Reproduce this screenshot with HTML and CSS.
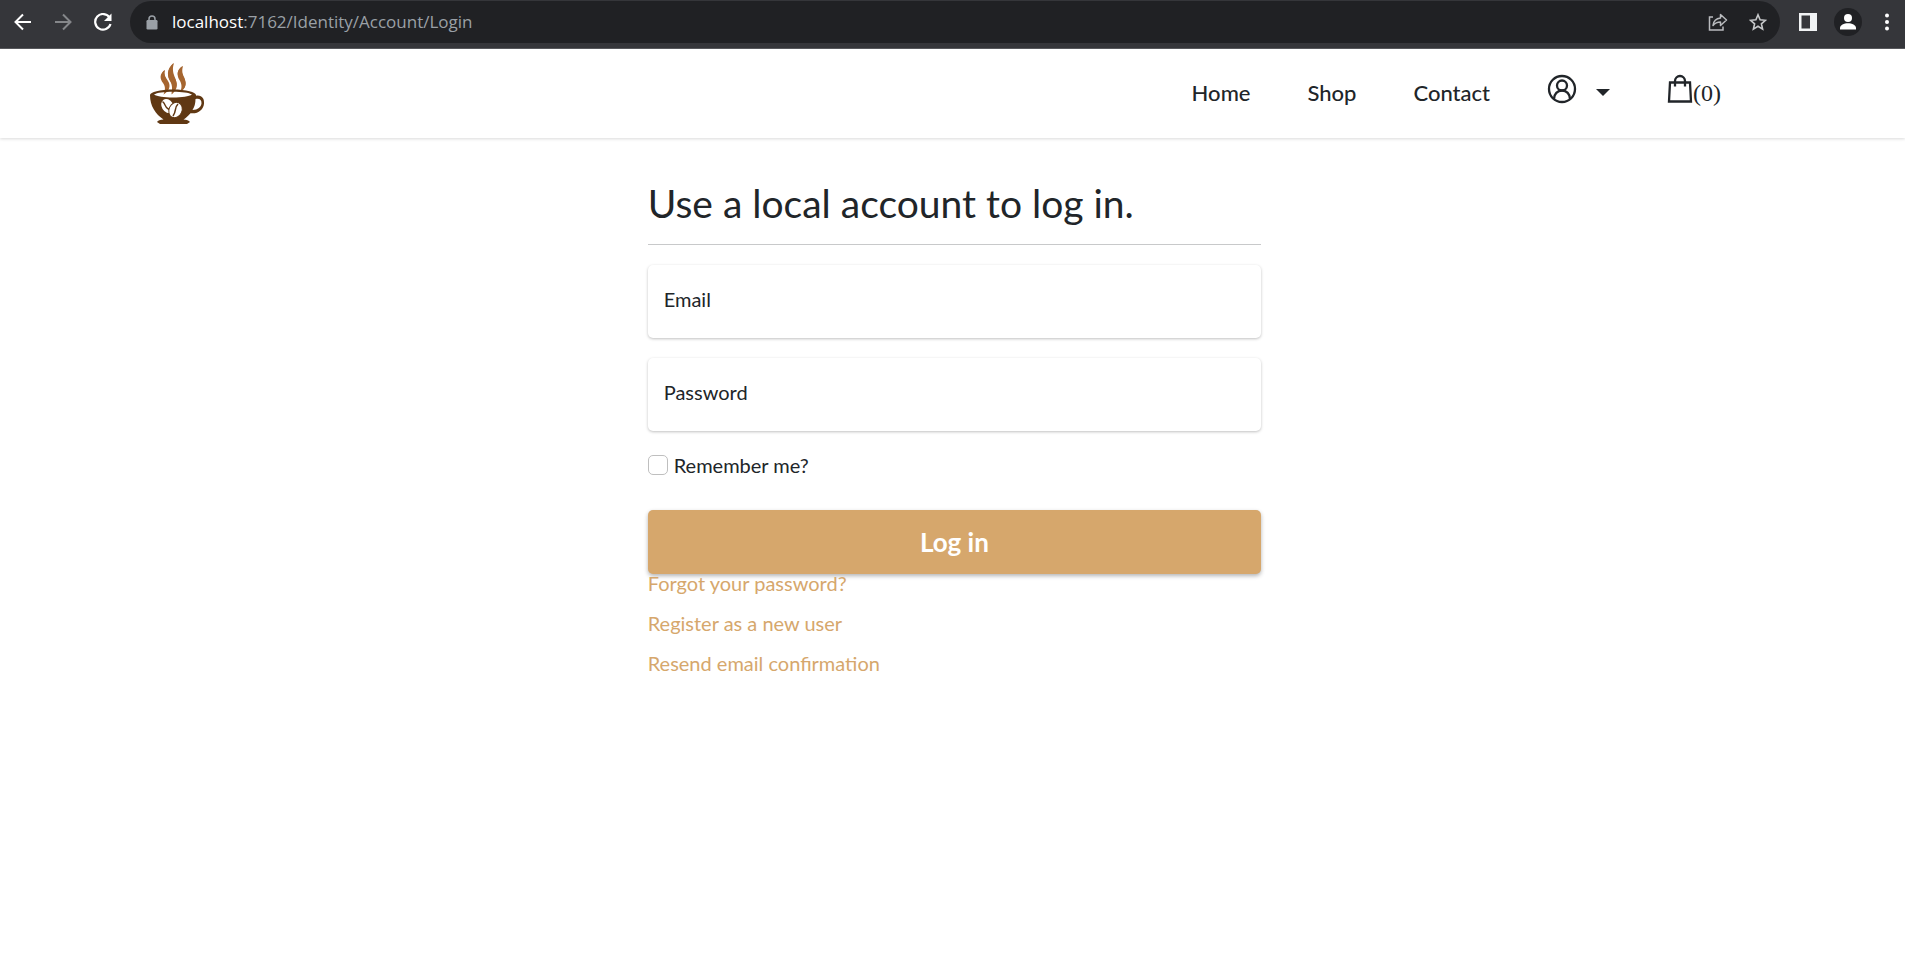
FILE: index.html
```html
<!DOCTYPE html>
<html lang="en">
<head>
<meta charset="utf-8">
<title>Log in</title>
<link rel="stylesheet" href="styles.css">
</head>
<body>
<div class="browser-bar">
  <button class="bar-btn" aria-label="Back"><svg width="18" height="18" viewBox="0 0 18 18" fill="none" stroke="#fff" stroke-width="2"><path d="M17 9H2M9 1.500L1.500 9L9 16.500"/></svg></button>
  <button class="bar-btn" aria-label="Forward"><svg width="18" height="18" viewBox="0 0 18 18" fill="none" stroke="#85878a" stroke-width="2"><path d="M1 9h15M9 1.500L16.500 9L9 16.500"/></svg></button>
  <button class="bar-btn" aria-label="Reload"><svg width="18" height="18" viewBox="0 0 18 18"><path d="M15.500 4.500A7.800 7.800 0 1 0 16.500 11" fill="none" stroke="#fff" stroke-width="2.200"/><path d="M17.500 .5v7.500h-7.500z" fill="#fff"/></svg></button>
  <div class="address">
    <svg width="12" height="15" viewBox="0 0 12 15"><rect x=".5" y="5" width="11" height="9.500" rx="1.200" fill="#9aa0a6"/><path d="M3 6V4a3 3 0 0 1 6 0v2" fill="none" stroke="#9aa0a6" stroke-width="1.500"/></svg>
    <span class="url"><span class="host">localhost</span>:7162/Identity/Account/Login</span>
    <button class="addr-btn" aria-label="Share"><svg width="20" height="18" viewBox="0 0 20 18" fill="none" stroke="#b9bbbe" stroke-width="1.500"><path d="M5 4H1.500v13H15v-3.500"/><path d="M5 12.500C5.500 8 8 5.500 12.500 5V1.500L18.500 7l-6 5.500V9C9 9 7 10 5 12.500z" stroke-linejoin="round"/></svg></button>
    <button class="addr-btn" aria-label="Bookmark"><svg width="18" height="18" viewBox="0 0 18 18" fill="none" stroke="#c6c8ca" stroke-width="1.600"><path d="M9 1.800l2.100 5 5.300.5-4 3.500 1.200 5.300L9 13.300l-4.600 2.800 1.200-5.300-4-3.500 5.300-.5z"/></svg></button>
  </div>
  <button class="bar-btn" aria-label="Side panel"><svg width="18" height="18" viewBox="0 0 18 18"><path fill="#f1f3f4" fill-rule="evenodd" d="M0 0h18v18H0zM2.500 2.500v13h8.500v-13z"/></svg></button>
  <button class="bar-btn" aria-label="Profile"><svg width="28" height="28" viewBox="0 0 28 28"><circle cx="14" cy="14" r="14" fill="#202124"/><circle cx="14" cy="10" r="4" fill="#fff"/><path d="M6 21.500v-1.500c0-3 4-4.800 8-4.800s8 1.800 8 4.800v1.500z" fill="#fff"/></svg></button>
  <button class="bar-btn menu" aria-label="Menu"><svg width="4" height="18" viewBox="0 0 4 18" fill="#fff"><circle cx="2" cy="2.500" r="2"/><circle cx="2" cy="9" r="2"/><circle cx="2" cy="15.500" r="2"/></svg></button>
</div>
<header class="site-header">
  <a href="#" class="logo" aria-label="Coffee shop home">
    <svg width="56" height="62" viewBox="0 0 56 62">
      <g fill="#a5652f"><path d="M14.500 8C10 12 11 16 14.500 21c3 4 1.500 8-1 11.500 5-3 8-8 4.500-13.500-3-5-5-7-3.500-11z"/><path d="M15 8C9 12 10 17 13 21c3 4 2 8 .5 11.500 4-3 6-8 3.500-13.500-2-4-3-7-2-11z"/><path d="M23.500 1C16 8 17 14 21 20c3 4 2 9 .5 12.500 5-4 7-9 4-15C22.500 12 21 8 23.500 1z"/><path d="M24 1C17 7 17 14 20 19c3 5 2 9 1.500 13 5-5 6-9 4-15C23 11 22 7 24 1z"/><path d="M32.500 4C26 9 27 13 30.500 18.500c2.500 4 2 8 0 11.500 5-4 7-8 3.500-14-2.500-4-3-8-1.500-12z"/><path d="M33 4C26 8 27 14 29.500 18c3 5 2 8 1 12 5-4 6-8 4-14-2-4-3-7-1.500-12z"/></g>
      <path fill="#603813" fill-rule="evenodd" d="M0 33c0-3 10-5.500 23-5.500s23 2.500 23 5.500v.7c6-1 8.500 3 8 8-.6 6-6 10.500-13.500 9.500-2.500 3-5 5-7 6.300 3 .3 5.500 1 6.500 2.500l-3 2H10l-3-2c1-1.500 3-2.200 6.500-2.500C5.500 52 0 44 0 33zm45.500 4c0 4-1 8-3 11 5.500 0 8.500-3 9-6.500.3-3.500-2-5.500-6-4.500zM4 32.500c3 1.800 10 3 19 3s16-1.200 19-3c-3-1.800-10-2.800-19-2.800s-16 1-19 2.800z"/>
      <g fill="#fff"><ellipse cx="17.500" cy="44" rx="5.800" ry="7.500" transform="rotate(-32 17.500 44)"/><ellipse cx="25.500" cy="48" rx="6.500" ry="8" transform="rotate(24 25.500 48)" stroke="#603813"/></g>
      <path d="M12.500 39.500c4 3 1 5 6.500 8M28 42c-4 4-1 6-5 12" fill="none" stroke="#603813" stroke-width="1.500"/>
    </svg>
  </a>
  <nav class="nav">
    <a href="#">Home</a>
    <a href="#">Shop</a>
    <a href="#">Contact</a>
    <button class="account" aria-label="Account"><svg width="30" height="30" viewBox="0 0 30 30" fill="none" stroke="#212529" stroke-width="2.300"><circle cx="15" cy="15" r="13"/><circle cx="15" cy="11.500" r="5"/><path d="M7 25c0-5 3.500-8.500 8-8.500s8 3.500 8 8.500"/></svg><svg class="caret" width="14" height="7" viewBox="0 0 14 7"><path d="M0 0h14L7 7z" fill="#212529"/></svg></button>
    <a href="#" class="cart" aria-label="Cart, 0 items"><svg width="26" height="30" viewBox="0 0 26 30" fill="none" stroke="#212529" stroke-width="2.300"><path d="M3 8.500h20l1 19H2zM8 12.500V7a5 5 0 0 1 10 0v5.500"/></svg><span>(0)</span></a>
  </nav>
</header>
<main class="content">
  <form class="login">
    <h1>Use a local account to log in.</h1>
    <hr>
    <label class="field"><span>Email</span><input type="email" name="email"></label>
    <label class="field"><span>Password</span><input type="password" name="password"></label>
    <label class="remember"><input type="checkbox" name="remember">Remember me?</label>
    <button class="submit" type="button">Log in</button>
    <div class="links">
      <a href="#">Forgot your password?</a>
      <a href="#">Register as a new user</a>
      <a href="#">Resend email confirmation</a>
    </div>
  </form>
</main>
</body>
</html>
```

FILE: styles.css
```css
* { box-sizing: border-box; }
body {
  margin: 0;
  background: #fff;
  color: #212529;
  font-family: Lato, "Open Sans", sans-serif;
  font-size: 20px;
  line-height: 30px;
}
button { padding: 0; border: 0; background: none; font: inherit; color: inherit; }
a { text-decoration: none; }
svg { display: block; flex: none; }

.browser-bar {
  display: flex;
  align-items: center;
  height: 49px;
  padding: 0 9px 4px 3px;
  background: #35363a;
  border-bottom: 1px solid #5a5b5f;
}
.bar-btn { display: flex; justify-content: center; width: 40px; }
.menu { width: 38px; margin-right: -10px; }
.address {
  flex: 1;
  display: flex;
  align-items: center;
  height: 42px;
  margin: 0 8px 0 7px;
  padding: 0 2px 0 16px;
  border-radius: 21px;
  background: #202124;
}
.url {
  flex: 1;
  margin-left: 14px;
  color: #9aa0a6;
  font: 17px/24px "Open Sans", sans-serif;
}
.host { color: #fff; }
.addr-btn { display: flex; justify-content: center; width: 40px; }

.site-header {
  display: flex;
  justify-content: space-between;
  align-items: center;
  height: 89px;
  padding: 0 184px 2px 150px;
  box-shadow: 0 1px 3px rgba(0, 0, 0, .15);
}
.nav { display: flex; align-items: center; gap: 57px; font-weight: 500; font-size: 22px; }
.nav a { color: #212529; }
.account { display: flex; align-items: center; gap: 19px; padding-bottom: 7px; }
.caret { margin-top: 7px; }
.cart { display: flex; align-items: center; font: 24px/30px "Liberation Serif", serif; }
.cart svg { margin-bottom: 7px; }

.content { padding: 40px 33.8% 0 34%; }
.login { display: flex; flex-direction: column; }
h1 { margin: 0; font-size: 39px; line-height: 50px; font-weight: 400; white-space: nowrap; }
hr { width: 100%; height: 1px; margin: 16px 0 20px; border: 0; background: #c8c9ca; }
.field {
  display: grid;
  height: 73px;
  margin-bottom: 20px;
  border-radius: 5px;
  box-shadow: 0 1px 3px rgba(0, 0, 0, .25);
}
.field span, .field input { grid-area: 1 / 1; }
.field span { padding: 19px 16px; pointer-events: none; }
.field input {
  width: 100%;
  padding: 20px 16px 0;
  border: 0;
  border-radius: 5px;
  background: transparent;
  font: inherit;
}
.remember { display: flex; align-items: center; gap: 6px; line-height: 28px; }
.remember input {
  appearance: none;
  width: 20px;
  height: 20px;
  margin: 0;
  border: 1px solid #bfbfbf;
  border-radius: 5px;
  background: #fff;
}
.submit {
  height: 64px;
  margin-top: 31px;
  border-radius: 5px;
  background: #d6a76c;
  box-shadow: 0 2px 4px rgba(0, 0, 0, .3);
  color: #fff;
  font-size: 26px;
  font-weight: 700;
}
.links { display: flex; flex-direction: column; align-items: flex-start; gap: 22px; line-height: 18px; }
.links a { color: #d6a76c; }
```
